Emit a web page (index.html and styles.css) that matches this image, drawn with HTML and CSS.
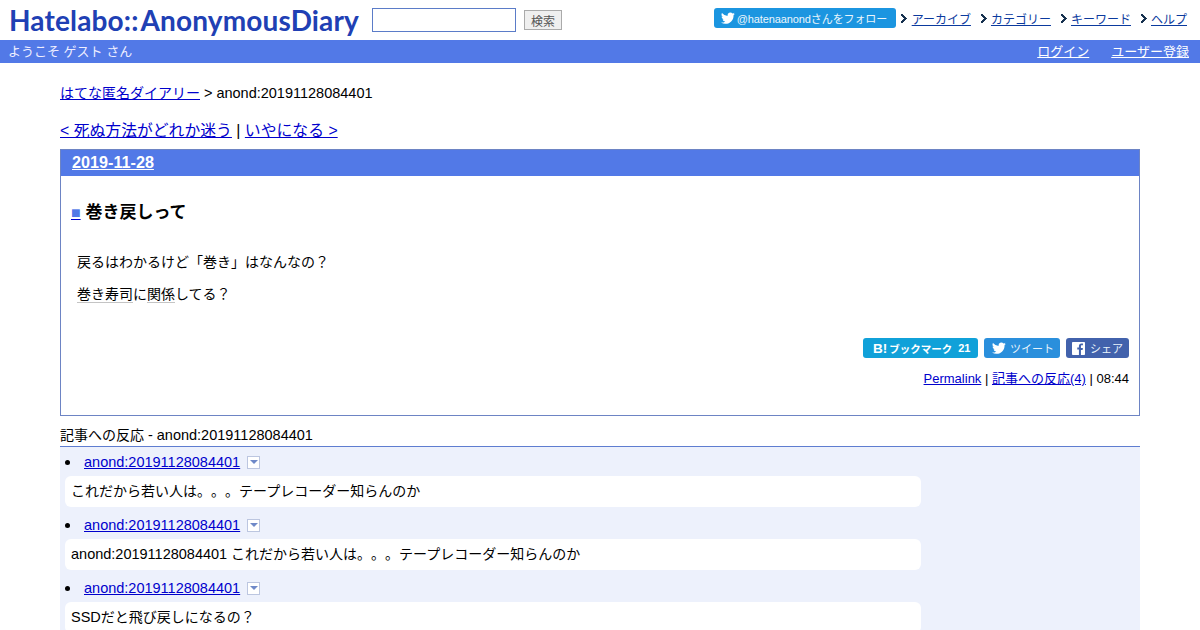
FILE: index.html
```html
<!DOCTYPE html>
<html lang="ja">
<head>
<meta charset="utf-8">
<title>巻き戻しって</title>
<link rel="stylesheet" href="styles.css">
</head>
<body>
<header class="top">
  <a class="logo">Hatelabo::<span class="logo-b">AnonymousDiary</span></a>
  <form class="search">
    <input class="search-input" type="text">
    <span class="search-btn">検索</span>
  </form>
  <nav class="nav">
    <a class="follow"><svg class="ico" viewBox="0 0 24 24" width="14" height="14"><path fill="#fff" d="M23.5 4.8c-.9.4-1.800.7-2.800.8 1-.6 1.800-1.500 2.100-2.700-.9.6-2 1-3.100 1.200A4.900 4.900 0 0 0 11.400 8.600 13.900 13.900 0 0 1 1.700 3.500a4.900 4.900 0 0 0 1.500 6.500c-.8 0-1.500-.2-2.200-.6v.1c0 2.400 1.700 4.400 3.900 4.800-.7.200-1.500.2-2.200.1.600 1.900 2.400 3.300 4.600 3.400A9.900 9.900 0 0 1 0 19.800 13.900 13.900 0 0 0 7.500 22c9.100 0 14-7.500 14-14v-.6c1-.7 1.800-1.600 2-2.600z"/></svg><span>@hatenaanondさんをフォロー</span></a>
    <a class="nav-link"><svg class="arrow" viewBox="0 0 7 9" width="7" height="9"><path fill="#16314f" d="M0 0h2v1h1v1h1v1h1v1h1v1h-1v1h-1v1h-1v1h-1v1h-2v-2h1v-1h1v-1h1v-1h-1v-1h-1v-1h-1z"/></svg><u>アーカイブ</u></a>
    <a class="nav-link"><svg class="arrow" viewBox="0 0 7 9" width="7" height="9"><path fill="#16314f" d="M0 0h2v1h1v1h1v1h1v1h1v1h-1v1h-1v1h-1v1h-1v1h-2v-2h1v-1h1v-1h1v-1h-1v-1h-1v-1h-1z"/></svg><u>カテゴリー</u></a>
    <a class="nav-link"><svg class="arrow" viewBox="0 0 7 9" width="7" height="9"><path fill="#16314f" d="M0 0h2v1h1v1h1v1h1v1h1v1h-1v1h-1v1h-1v1h-1v1h-2v-2h1v-1h1v-1h1v-1h-1v-1h-1v-1h-1z"/></svg><u>キーワード</u></a>
    <a class="nav-link"><svg class="arrow" viewBox="0 0 7 9" width="7" height="9"><path fill="#16314f" d="M0 0h2v1h1v1h1v1h1v1h1v1h-1v1h-1v1h-1v1h-1v1h-2v-2h1v-1h1v-1h1v-1h-1v-1h-1v-1h-1z"/></svg><u>ヘルプ</u></a>
  </nav>
</header>
<div class="bar">
  <span>ようこそ ゲスト さん</span>
  <span class="bar-links"><a href="#">ログイン</a><a href="#">ユーザー登録</a></span>
</div>
<main class="main">
  <p class="crumb"><a href="#">はてな匿名ダイアリー</a> <span class="en">&gt; anond:20191128084401</span></p>
  <p class="pager"><a href="#">&lt; 死ぬ方法がどれか迷う</a> | <a href="#">いやになる &gt;</a></p>
  <section class="day">
    <h2 class="date"><a href="#">2019-11-28</a></h2>
    <div class="body">
      <h3 class="title"><a class="sq" href="#">■</a> 巻き戻しって</h3>
      <p class="para">戻るはわかるけど「巻き」はなんなの？</p>
      <p class="para"><span class="kw">巻き寿司</span>に<span class="kw">関係</span>してる？</p>
      <div class="share">
        <a class="sbtn hb"><b class="hb-b">B!</b><b class="hb-l">ブックマーク</b><b class="hb-n">21</b></a>
        <a class="sbtn tw"><svg viewBox="0 0 24 24" width="14" height="14"><path fill="#fff" d="M23.5 4.8c-.9.4-1.800.7-2.800.8 1-.6 1.800-1.500 2.100-2.700-.9.6-2 1-3.100 1.200A4.900 4.900 0 0 0 11.400 8.600 13.900 13.900 0 0 1 1.700 3.500a4.900 4.900 0 0 0 1.500 6.500c-.8 0-1.500-.2-2.200-.6v.1c0 2.400 1.700 4.400 3.900 4.800-.7.200-1.500.2-2.200.1.600 1.900 2.400 3.300 4.600 3.400A9.900 9.900 0 0 1 0 19.800 13.900 13.900 0 0 0 7.500 22c9.100 0 14-7.500 14-14v-.6c1-.7 1.800-1.600 2-2.600z"/></svg><span>ツイート</span></a>
        <a class="sbtn fb"><svg viewBox="0 0 24 24" width="13" height="13"><path fill="#fff" d="M1.500 0h21c.8 0 1.500.7 1.500 1.500v21c0 .8-.7 1.500-1.500 1.500h-6v-9.300h3.100l.5-3.600h-3.600V7.800c0-1 .3-1.800 1.800-1.800h1.900V2.800c-.3 0-1.500-.1-2.800-.1-2.800 0-4.600 1.700-4.600 4.800v2.600H9.700v3.600h3.100V24H1.500C.7 24 0 23.300 0 22.500v-21C0 .7.700 0 1.500 0z"/></svg><span>シェア</span></a>
      </div>
      <p class="foot"><a href="#">Permalink</a> | <a href="#">記事への反応(4)</a> | 08:44</p>
    </div>
  </section>
  <h4 class="ref-head">記事への反応 <span class="en">- anond:20191128084401</span></h4>
  <ul class="refs">
    <li class="ref">
      <div class="ref-line"><i class="dot"></i><a class="en" href="#">anond:20191128084401</a><i class="toggle"></i></div>
      <div class="ref-text">これだから若い人は。。。テープレコーダー知らんのか</div>
    </li>
    <li class="ref">
      <div class="ref-line"><i class="dot"></i><a class="en" href="#">anond:20191128084401</a><i class="toggle"></i></div>
      <div class="ref-text"><span class="en">anond:20191128084401</span> これだから若い人は。。。テープレコーダー知らんのか</div>
    </li>
    <li class="ref">
      <div class="ref-line"><i class="dot"></i><a class="en" href="#">anond:20191128084401</a><i class="toggle"></i></div>
      <div class="ref-text"><span class="en">SSD</span>だと飛び戻しになるの？</div>
    </li>
  </ul>
</main>
</body>
</html>
```
FILE: styles.css
```css
html, body { margin: 0; padding: 0; height: 630px; overflow: hidden; }
body { font-family: "Liberation Sans", "Noto Sans CJK JP", sans-serif; font-size: 14px; color: #000; background: #fff; text-spacing-trim: space-all; }
a { color: #0000cc; }
p, h2, h3, h4, ul { margin: 0; padding: 0; }
.en { font-size: 14.5px; }

.top { height: 40px; display: flex; align-items: center; padding: 0 13px 0 9px; box-sizing: border-box; }
.logo { font-family: "Lato", sans-serif; font-weight: 700; font-size: 28px; color: #2040b4; width: 351px; white-space: nowrap; letter-spacing: .15px; }
.logo-b { margin-left: 2px; }
.search { display: flex; align-items: center; margin-left: 12px; gap: 8px; }
.search-input { width: 144px; height: 24px; box-sizing: border-box; border: 1px solid #5b7cc8; outline: 0; padding: 0; background: #fff; margin: 0; }
.search-btn { width: 38px; height: 20px; box-sizing: border-box; border: 1px solid #aaa; background: #efefef; color: #555; font-size: 12px; display: flex; align-items: center; justify-content: center; }
.nav { margin-left: auto; display: flex; align-items: center; font-size: 12px; padding-bottom: 4px; }
.follow { display: flex; align-items: center; gap: 2px; width: 182px; height: 20px; box-sizing: border-box; padding-left: 7px; background: #1b95e0; border-radius: 3px; color: #eaf5fc; font-size: 11px; letter-spacing: -.1px; white-space: nowrap; }
.nav-link { display: flex; align-items: center; color: #0b3a9e; margin-left: 10px; white-space: nowrap; }
.follow + .nav-link { margin-left: 5px; }
.arrow { margin-right: 3px; }
.follow + .nav-link .arrow { margin-right: 4px; }

.bar { height: 23px; background: #5279e7; color: #eef; display: flex; justify-content: space-between; align-items: center; padding: 0 11px 2px 8px; box-sizing: border-box; font-size: 13px; }
.bar-links { display: flex; gap: 22px; }
.bar-links a { color: #fff; }

.main { padding: 0 60px; }
.crumb { margin-top: 21px; line-height: 18px; }
.pager { margin-top: 19px; font-size: 15.84px; line-height: 20px; }
.day { border: 1px solid #6d84c4; margin-top: 8px; height: 267px; box-sizing: border-box; }
.date { background: #5279e7; height: 26px; line-height: 24px; margin: 0; padding-left: 11px; font-size: 16.2px; }
.date a { color: #fff; }
.body { padding: 0 10px; }
.title { font-size: 17px; margin-top: 26px; line-height: 22px; }
.sq { color: #5279e7; font-size: 16px; text-decoration-color: #0000cc; }
.para { margin: 0 0 0 6px; line-height: 32px; }
.title + .para { margin-top: 22px; }
.kw { border-bottom: 1px solid #c4c4c4; }
.share { display: flex; justify-content: flex-end; gap: 6px; margin-top: 28px; }
.sbtn { height: 20px; border-radius: 3px; color: #e8f3fb; font-size: 11px; display: flex; align-items: center; box-sizing: border-box; }
.hb { width: 115px; background: #10a1d9; padding-left: 10px; gap: 2px; color: #fff; }
.hb-b { font-size: 13.5px; }
.hb-l { font-size: 10.5px; }
.hb-n { margin-left: 4px; font-size: 11px; }
.tw { width: 76px; background: #2a8fdc; padding-left: 8px; gap: 4px; }
.fb { width: 63px; background: #4262ac; padding-left: 6px; gap: 5px; }
.foot { text-align: right; font-size: 13px; margin-top: 12px; line-height: 18px; }

.ref-head { font-weight: 400; margin-top: 10px; line-height: 19px; border-bottom: 1px solid #5f7dd0; height: 20px; }
.refs { list-style: none; background: #edf1fc; height: 200px; padding: 5px 219px 0 5px; }
.ref { margin-bottom: 8px; }
.ref-line { display: flex; align-items: center; height: 20px; }
.dot { width: 5px; height: 5px; border-radius: 50%; background: #000; margin-right: 14px; }
.toggle { width: 13px; height: 13px; box-sizing: border-box; border: 1px solid #bcc6e0; background: #fff; margin-left: 7px; display: flex; align-items: center; justify-content: center; }
.toggle::after { content: ""; border: 4px solid transparent; border-top: 4px solid #6f89c8; border-bottom: 0; }
.ref-text { background: #fff; border-radius: 6px; height: 31px; line-height: 31px; padding-left: 6px; margin-top: 4px; }
```
